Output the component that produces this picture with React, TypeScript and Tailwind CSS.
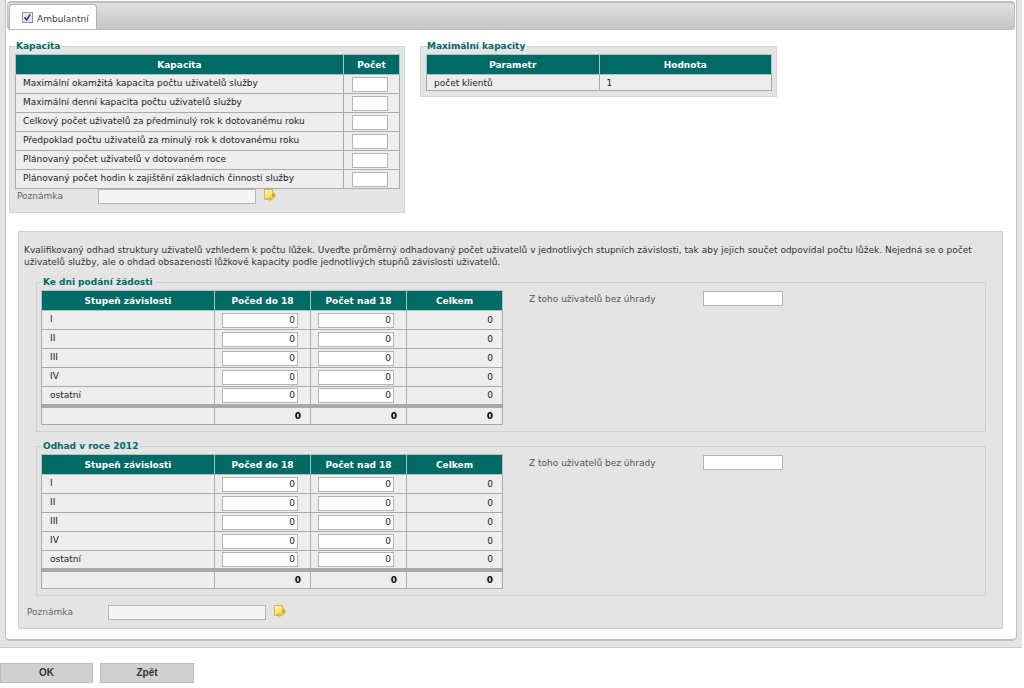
import { useState } from "react";

const capacityRows = [
  "Maximální okamžitá kapacita počtu uživatelů služby",
  "Maximální denní kapacita počtu uživatelů služby",
  "Celkový počet uživatelů za předminulý rok k dotovanému roku",
  "Předpoklad počtu uživatelů za minulý rok k dotovanému roku",
  "Plánovaný počet uživatelů v dotovaném roce",
  "Plánovaný počet hodin k zajištění základních činností služby",
];

const levels = ["I", "II", "III", "IV", "ostatní"];

const th = "h-[20px] border border-[#a9c4c2] bg-[#006b65] p-0 text-center font-bold text-white";
const td = "border border-[#a9a9a9] bg-[#ededed] p-0";
const field = "block h-[15px] border border-[#b4b4b4] bg-white px-[2px] text-[#222]";

function NoteIcon() {
  return (
    <svg width="13" height="13" viewBox="0 0 13 13" aria-hidden="true">
      <path d="M1.5.5h8.2v2.6l2.3 2v2.6L9.7 10H8.2L7 11.7 5.6 10.4H1.5z" fill="#f3dc50" stroke="#cdb35c" />
      <path d="M2 1h7v3L6 7.4 2 8.6z" fill="#f9ea78" />
      <path d="M2 1h4L2 5z" fill="#fdf6b4" />
      <path d="M9.3 3.6l2.7 2.6-2.7 2.9z" fill="#c8942e" />
      <path d="M4 9.8h4.4" stroke="#d2a22c" />
    </svg>
  );
}

function Note({ id, className }: { id: string; className: string }) {
  return (
    <div className={`flex items-start ${className}`}>
      <label htmlFor={id} className="w-[81px] pt-[1px] text-[#666]">
        Poznámka
      </label>
      <input id={id} className="h-[15px] w-[158px] border border-[#b4b4b4] bg-[#f5f5f5] px-[2px]" />
      <button type="button" aria-label="Upravit poznámku" className="ml-[7px]">
        <NoteIcon />
      </button>
    </div>
  );
}

function CapacityTable() {
  return (
    <table className="w-full table-fixed border-collapse">
      <colgroup>
        <col />
        <col className="w-[56px]" />
      </colgroup>
      <thead>
        <tr>
          <th className={th}>Kapacita</th>
          <th className={th}>Počet</th>
        </tr>
      </thead>
      <tbody>
        {capacityRows.map((row, i) => (
          <tr key={row}>
            <td className={`${td} h-[19px] pl-[7px] align-top`}>
              <label htmlFor={`cap-${i}`} className="block pt-[2px]">
                {row}
              </label>
            </td>
            <td className={`${td} h-[19px]`}>
              <input id={`cap-${i}`} className={`${field} ml-[8px] w-[36px]`} />
            </td>
          </tr>
        ))}
      </tbody>
    </table>
  );
}

function DependencyTable({ id, title }: { id: string; title: string }) {
  const [under, setUnder] = useState<string[]>(levels.map(() => "0"));
  const [over, setOver] = useState<string[]>(levels.map(() => "0"));
  const sum = (list: string[]) => list.reduce((a, v) => a + (Number(v) || 0), 0);
  const change = (list: string[], i: number, v: string) => list.map((x, j) => (j === i ? v : x));

  return (
    <fieldset className="border border-[#d0d0d0] px-[4px] pt-[2px] pb-[6px]">
      <legend className="px-[2px] font-bold text-[#006b65]">{title}</legend>
      <div className="flex items-start">
        <table className="w-[462px] table-fixed border-collapse">
          <colgroup>
            <col />
            <col className="w-[96px]" />
            <col className="w-[96px]" />
            <col className="w-[96px]" />
          </colgroup>
          <thead>
            <tr>
              <th className={th}>Stupeň závislosti</th>
              <th className={th}>Počed do 18</th>
              <th className={th}>Počet nad 18</th>
              <th className={th}>Celkem</th>
            </tr>
          </thead>
          <tbody>
            {levels.map((level, i) => (
              <tr key={level}>
                <td className={`${td} h-[19px] pl-[8px] align-top`}>
                  <div className="pt-[2px]">{level}</div>
                </td>
                <td className={`${td} h-[19px]`}>
                  <input
                    aria-label={`${level}, do 18`}
                    value={under[i]}
                    onChange={(e) => setUnder(change(under, i, e.target.value))}
                    className={`${field} ml-[7px] w-[76px] text-right`}
                  />
                </td>
                <td className={`${td} h-[19px]`}>
                  <input
                    aria-label={`${level}, nad 18`}
                    value={over[i]}
                    onChange={(e) => setOver(change(over, i, e.target.value))}
                    className={`${field} ml-[7px] w-[76px] text-right`}
                  />
                </td>
                <td className={`${td} h-[19px] pr-[9px] text-right`}>{sum([under[i], over[i]])}</td>
              </tr>
            ))}
          </tbody>
          <tfoot>
            <tr className="font-bold text-black">
              <td className={`${td} h-[19px] border-t-4`} />
              <td className={`${td} h-[19px] border-t-4 pr-[9px] text-right`}>{sum(under)}</td>
              <td className={`${td} h-[19px] border-t-4 pr-[9px] text-right`}>{sum(over)}</td>
              <td className={`${td} h-[19px] border-t-4 pr-[9px] text-right`}>{sum([...under, ...over])}</td>
            </tr>
          </tfoot>
        </table>
        <div className="ml-[26px] flex items-start text-[#555]">
          <label htmlFor={id} className="w-[174px] pt-[3px]">
            Z toho uživatelů bez úhrady
          </label>
          <input id={id} className={`${field} mt-[1px] w-[80px]`} />
        </div>
      </div>
    </fieldset>
  );
}

export default function App() {
  const [active, setActive] = useState(true);

  return (
    <div className="bg-white pr-[2px] font-['DejaVu_Sans',sans-serif] text-[9px] leading-[12px] text-[#222]">
      {/* PANEL */}
      <div className="border-b border-[#c8c8c8] bg-[#e4e4e4] px-[5px] pb-[6px]">
        <div className="rounded-b-[5px] border-x border-b-2 border-[#c0c0c0] bg-white px-[1px] pt-[1px] pb-[10px]">
          {/* TABS */}
          <div className="flex h-[29px] items-end rounded-[4px] border border-t-2 border-[#bdbdbd] bg-linear-to-b from-[#e0e0e0] to-[#c4c4c4] px-[1px]">
            <div className="flex h-[25px] w-[88px] items-center gap-[4px] rounded-t-[4px] border border-b-0 border-[#b4b4b4] bg-white pl-[12px]">
              <span className="grid place-items-center">
                <input
                  id="tab-check"
                  type="checkbox"
                  checked={active}
                  onChange={(e) => setActive(e.target.checked)}
                  className="col-start-1 row-start-1 size-[11px] appearance-none border border-[#8e98a4] bg-[#e3e8f2]"
                />
                {active && (
                  <svg width="9" height="9" viewBox="0 0 9 9" className="pointer-events-none col-start-1 row-start-1" aria-hidden="true">
                    <path d="M1.5 4.3l2.2 2.6L7.2 1.4" fill="none" stroke="#34407a" strokeWidth="1.7" />
                  </svg>
                )}
              </span>
              <label htmlFor="tab-check" className="pt-[4px] text-[#444]">
                Ambulantní
              </label>
            </div>
          </div>

          {/* CAPACITY */}
          <div className="flex items-start gap-[15px] px-[2px] pt-[10px]">
            <fieldset className="w-[396px] border border-[#d4d4d4] bg-[#e4e4e4] pt-[2px] pr-[4px] pb-[8px] pl-[5px]">
              <legend className="px-[1px] font-bold text-[#006b65]">Kapacita</legend>
              <CapacityTable />
              <Note id="note-1" className="pl-[2px]" />
            </fieldset>

            <fieldset className="w-[357px] border border-[#d4d4d4] bg-[#e4e4e4] pt-[2px] pr-[4px] pb-[5px] pl-[5px]">
              <legend className="px-[1px] font-bold text-[#006b65]">Maximální kapacity</legend>
              <table className="w-full table-fixed border-collapse">
                <thead>
                  <tr>
                    <th className={th}>Parametr</th>
                    <th className={th}>Hodnota</th>
                  </tr>
                </thead>
                <tbody>
                  <tr>
                    <td className={`${td} h-[16px] pl-[7px]`}>počet klientů</td>
                    <td className={`${td} h-[16px] pl-[7px]`}>1</td>
                  </tr>
                </tbody>
              </table>
            </fieldset>
          </div>

          {/* ESTIMATE */}
          <div className="mt-[18px] mr-[12px] ml-[11px] border border-[#d0d0d0] bg-[#e4e4e4] px-[5px] pt-[12px] pb-[8px]">
            <p className="pr-[16px] text-[#333]">
              Kvalifikovaný odhad struktury uživatelů vzhledem k počtu lůžek. Uveďte průměrný odhadovaný počet uživatelů
              v jednotlivých stupních závislosti, tak aby jejich součet odpovídal počtu lůžek. Nejedná se o počet
              uživatelů služby, ale o ohdad obsazenosti lůžkové kapacity podle jednotlivých stupňů závislosti uživatelů.
            </p>
            <div className="mt-[8px] mr-[11px] ml-[12px] flex flex-col gap-[8px]">
              <DependencyTable id="free-1" title="Ke dni podání žádosti" />
              <DependencyTable id="free-2" title="Odhad v roce 2012" />
            </div>
            <Note id="note-2" className="mt-[9px] pl-[3px]" />
          </div>
        </div>
      </div>

      {/* BUTTONS */}
      <div className="flex gap-[7px] pt-[15px] font-['Liberation_Sans',sans-serif] text-[10px] font-bold text-[#333]">
        <button type="button" className="h-[20px] w-[93px] border border-[#bcbcbc] bg-[#d0d0d0]">
          OK
        </button>
        <button type="button" className="h-[20px] w-[94px] border border-[#bcbcbc] bg-[#d0d0d0]">
          Zpět
        </button>
      </div>
    </div>
  );
}
